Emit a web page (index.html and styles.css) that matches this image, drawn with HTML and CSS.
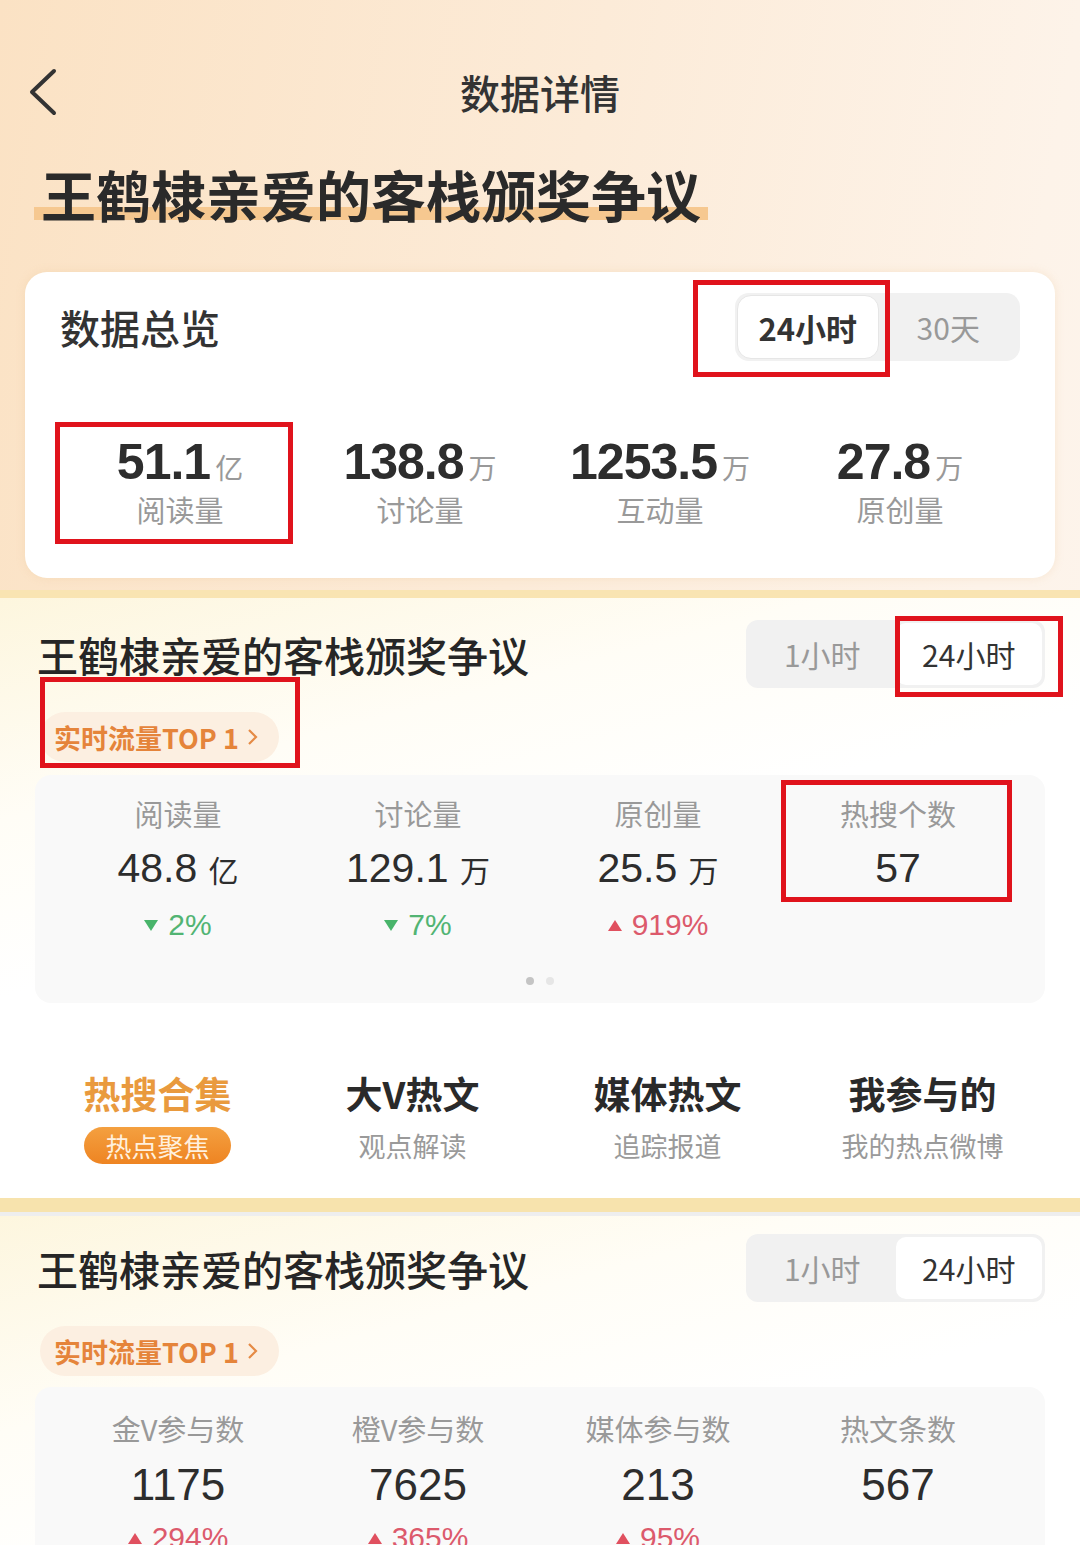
FILE: index.html
```html
<!DOCTYPE html>
<html lang="zh-CN">
  <head>
    <meta charset="UTF-8" />
    <meta name="viewport" content="width=device-width, initial-scale=1.0" />
    <title>数据详情</title>
    <link rel="stylesheet" href="styles.css">
  </head>
  <body>
    <header class="nav">
      <svg class="back" width="32" height="48" viewBox="0 0 32 48">
        <polyline points="26,3 4,24 26,45" fill="none" stroke="#333" stroke-width="4" stroke-linecap="round" stroke-linejoin="round" />
      </svg>
      <h1>数据详情</h1>
    </header>

    <h2 class="topic"><span>王鹤棣亲爱的客栈颁奖争议</span></h2>

    <section class="card">
      <div class="card-head">
        <h3>数据总览</h3>
        <div class="seg seg-main">
          <span class="on">24小时</span>
          <span>30天</span>
        </div>
      </div>
      <div class="totals">
        <div class="total">
          <div class="num">51.1<small>亿</small></div>
          <div class="label">阅读量</div>
        </div>
        <div class="total">
          <div class="num">138.8<small>万</small></div>
          <div class="label">讨论量</div>
        </div>
        <div class="total">
          <div class="num">1253.5<small>万</small></div>
          <div class="label">互动量</div>
        </div>
        <div class="total">
          <div class="num">27.8<small>万</small></div>
          <div class="label">原创量</div>
        </div>
      </div>
    </section>

    <section class="panel">
      <div class="panel-head">
        <h3>王鹤棣亲爱的客栈颁奖争议</h3>
        <div class="seg">
          <span>1小时</span>
          <span class="on">24小时</span>
        </div>
      </div>
      <a class="rank">实时流量TOP 1
        <svg width="12" height="20" viewBox="0 0 12 20"><polyline points="2,3 9,10 2,17" fill="none" stroke="#e58a45" stroke-width="2.2" /></svg>
      </a>
      <div class="stats">
        <div class="stat">
          <div class="label">阅读量</div>
          <div class="val">48.8 <small>亿</small></div>
          <div class="chg down">2%</div>
        </div>
        <div class="stat">
          <div class="label">讨论量</div>
          <div class="val">129.1 <small>万</small></div>
          <div class="chg down">7%</div>
        </div>
        <div class="stat">
          <div class="label">原创量</div>
          <div class="val">25.5 <small>万</small></div>
          <div class="chg up">919%</div>
        </div>
        <div class="stat">
          <div class="label">热搜个数</div>
          <div class="val">57</div>
        </div>
        <div class="dots"><i class="cur"></i><i></i></div>
      </div>
      <nav class="tabs">
        <div class="tab active">
          <div class="tab-title">热搜合集</div>
          <div class="tab-sub">热点聚焦</div>
        </div>
        <div class="tab">
          <div class="tab-title">大V热文</div>
          <div class="tab-sub">观点解读</div>
        </div>
        <div class="tab">
          <div class="tab-title">媒体热文</div>
          <div class="tab-sub">追踪报道</div>
        </div>
        <div class="tab">
          <div class="tab-title">我参与的</div>
          <div class="tab-sub">我的热点微博</div>
        </div>
      </nav>
    </section>

    <section class="panel panel-next">
      <div class="panel-head">
        <h3>王鹤棣亲爱的客栈颁奖争议</h3>
        <div class="seg">
          <span>1小时</span>
          <span class="on">24小时</span>
        </div>
      </div>
      <a class="rank">实时流量TOP 1
        <svg width="12" height="20" viewBox="0 0 12 20"><polyline points="2,3 9,10 2,17" fill="none" stroke="#e58a45" stroke-width="2.2" /></svg>
      </a>
      <div class="stats stats-big">
        <div class="stat">
          <div class="label">金V参与数</div>
          <div class="val">1175</div>
          <div class="chg up">294%</div>
        </div>
        <div class="stat">
          <div class="label">橙V参与数</div>
          <div class="val">7625</div>
          <div class="chg up">365%</div>
        </div>
        <div class="stat">
          <div class="label">媒体参与数</div>
          <div class="val">213</div>
          <div class="chg up">95%</div>
        </div>
        <div class="stat">
          <div class="label">热文条数</div>
          <div class="val">567</div>
        </div>
      </div>
    </section>

    <!-- red annotation boxes drawn over the screenshot -->
    <div class="mark m1"></div>
    <div class="mark m2"></div>
    <div class="mark m3"></div>
    <div class="mark m4"></div>
    <div class="mark m5"></div>
  </body>
</html>
```

FILE: styles.css
```css
body {
  margin: 0;
  position: relative;
  height: 1545px;
  overflow: hidden;
  font-family: "Noto Sans CJK SC", sans-serif;
  color: #333;
  background: linear-gradient(100deg, #fbe2c4 0%, #fcebd8 45%, #fdf3e9 80%, #fdf5ee 100%);
}
h1,
h2,
h3 {
  margin: 0;
}
.nav {
  display: flex;
  align-items: center;
  justify-content: center;
  position: relative;
  height: 64px;
  padding-top: 60px;
}
.back {
  position: absolute;
  left: 28px;
  top: 68px;
}
.nav h1 {
  font-size: 40px;
  font-weight: 500;
  line-height: 64px;
  color: #333;
}
.topic {
  margin-top: 34px;
  padding-left: 34px;
  font-size: 55px;
  font-weight: 700;
  line-height: 70px;
  color: #2a2a2a;
}
.topic span {
  display: inline-block;
  padding: 0 7px;
  background: linear-gradient(to bottom, transparent 49px, #f6c890 49px, #f6c890 62px, transparent 62px);
}
.card {
  margin: 44px 25px 0;
  height: 306px;
  box-sizing: border-box;
  background: #fff;
  border-radius: 22px;
  box-shadow: 0 0 8px rgba(230, 190, 140, 0.25);
}
.card-head {
  display: flex;
  justify-content: space-between;
  align-items: center;
  padding: 21px 35px 0 35px;
}
.card-head h3 {
  font-size: 40px;
  font-weight: 500;
  color: #333;
}
.seg {
  display: flex;
  width: 299px;
  height: 68px;
  box-sizing: border-box;
  padding: 3px;
  background: #f1f1f1;
  border-radius: 12px;
}
.seg span {
  flex: 1;
  display: flex;
  align-items: center;
  justify-content: center;
  font-size: 30px;
  color: #999;
  border-radius: 10px;
}
.seg .on {
  background: #fff;
  color: #333;
}
.seg-main {
  width: 285px;
  padding: 2px;
  border-radius: 14px;
}
.seg-main .on {
  font-size: 31px;
  font-weight: 700;
  border: 1px solid #e6e6e6;
  border-radius: 14px;
}
.totals {
  display: grid;
  grid-template-columns: repeat(4, 1fr);
  padding: 0 35px;
  margin-top: 73px;
  text-align: center;
}
.num {
  font-family: "Liberation Sans", "Noto Sans CJK SC", sans-serif;
  font-size: 50px;
  font-weight: 700;
  line-height: 56px;
  color: #2d2d2d;
  letter-spacing: -1px;
}
.num small {
  font-family: "Noto Sans CJK SC", sans-serif;
  font-size: 28px;
  font-weight: 400;
  color: #999;
  margin-left: 5px;
  letter-spacing: 0;
}
.label {
  font-size: 29px;
  line-height: 40px;
  color: #999;
}
.total .label {
  margin-top: -6px;
}
.panel {
  margin-top: 12px;
  border-top: 8px solid #f9e4b2;
  height: 608px;
  box-sizing: border-box;
  padding: 0 35px 0 37px;
  background: linear-gradient(165deg, #fdf6de 0%, #fffdf6 25%, #fff 45%);
}
.panel-next {
  margin-top: 0;
  border-top: 14px solid #f7e3ad;
  box-shadow: inset 0 6px 0 -2px #eee;
}
.panel-head {
  display: flex;
  justify-content: space-between;
  align-items: center;
  padding-top: 22px;
}
.panel-head h3 {
  font-size: 41px;
  font-weight: 500;
  color: #262626;
}
.rank {
  display: inline-flex;
  align-items: center;
  gap: 8px;
  margin-top: 24px;
  margin-left: 3px;
  height: 50px;
  padding: 0 20px 0 14px;
  border-radius: 25px;
  background: #fcefe1;
  font-size: 27px;
  font-weight: 700;
  color: #e5843a;
}
.stats {
  position: relative;
  display: grid;
  grid-template-columns: repeat(4, 240px);
  margin: 13px 0 0 -2px;
  padding: 18px 0 58px 23px;
  background: #f9f9f9;
  border-radius: 16px;
  text-align: center;
}
.val {
  margin-top: 10px;
  font-family: "Liberation Sans", "Noto Sans CJK SC", sans-serif;
  font-size: 41px;
  line-height: 50px;
  color: #2d2d2d;
}
.val small {
  font-family: "Noto Sans CJK SC", sans-serif;
  font-size: 30px;
}
.chg {
  margin-top: 11px;
  font-family: "Liberation Sans", sans-serif;
  font-size: 30px;
  line-height: 40px;
}
.chg::before {
  content: "";
  display: inline-block;
  vertical-align: middle;
  margin: -4px 10px 0 0;
  border-left: 7px solid transparent;
  border-right: 7px solid transparent;
}
.down {
  color: #52b473;
}
.down::before {
  border-top: 11px solid #48b46a;
}
.up {
  color: #dc5a6c;
}
.up::before {
  border-bottom: 11px solid #e0505f;
}
.dots {
  position: absolute;
  left: 0;
  right: 0;
  bottom: 18px;
  display: flex;
  justify-content: center;
  gap: 12px;
}
.dots i {
  width: 8px;
  height: 8px;
  border-radius: 50%;
  background: #e6e6e6;
}
.dots .cur {
  background: #c4c4c4;
}
.tabs {
  display: grid;
  grid-template-columns: repeat(4, 255px);
  margin: 65px 0 0 -7px;
  text-align: center;
}
.tab-title {
  font-size: 37px;
  font-weight: 700;
  line-height: 50px;
  color: #2a2a2a;
}
.tab-sub {
  margin-top: 9px;
  font-size: 27px;
  line-height: 37px;
  color: #9a9a9a;
}
.active .tab-title {
  color: #e99a3e;
}
.active .tab-sub {
  display: inline-block;
  width: 147px;
  border-radius: 19px;
  background: linear-gradient(to bottom, #f4a040, #ee8422);
  color: #fff0de;
  font-size: 26px;
}
.stats-big {
  margin-top: 11px;
  padding-top: 21px;
}
.stats-big .val {
  font-size: 44px;
  margin-top: 12px;
}
.stats-big .chg {
  margin-top: 8px;
}
.mark {
  position: absolute;
  border: 5px solid #e0131c;
}
.m1 {
  left: 693px;
  top: 280px;
  width: 187px;
  height: 87px;
}
.m2 {
  left: 55px;
  top: 422px;
  width: 228px;
  height: 112px;
}
.m3 {
  left: 40px;
  top: 677px;
  width: 250px;
  height: 81px;
}
.m4 {
  left: 895px;
  top: 616px;
  width: 158px;
  height: 71px;
}
.m5 {
  left: 781px;
  top: 780px;
  width: 221px;
  height: 112px;
}
```
